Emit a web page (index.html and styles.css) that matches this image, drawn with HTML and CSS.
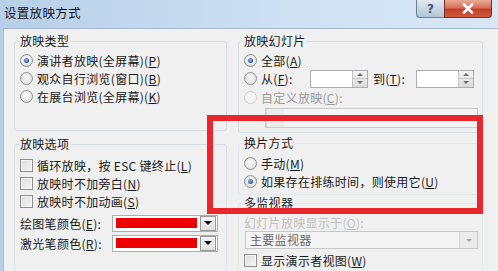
FILE: index.html
```html
<!DOCTYPE html>
<html lang="zh-CN">
<head>
    <meta charset="UTF-8">
    <title>设置放映方式</title>
    <link rel="stylesheet" href="styles.css">
</head>
<body>
<div class="window">
    <div class="titlebar">
        <span class="title">设置放映方式</span>
        <div class="caption-buttons">
            <span class="btn-help">?</span>
            <span class="btn-close">
                <svg width="14" height="11" viewBox="0 0 14 11"><path d="M3 1.5 L11 9.5 M11 1.5 L3 9.5" stroke="#fff" stroke-width="2.6" stroke-linecap="round"/></svg>
            </span>
        </div>
    </div>

    <div class="client">
        <div class="col col-left">
            <fieldset class="group g-type">
                <legend>放映类型</legend>
                <div class="row"><span class="radio checked"></span>演讲者放映(全屏幕)(<u>P</u>)</div>
                <div class="row"><span class="radio"></span>观众自行浏览(窗口)(<u>B</u>)</div>
                <div class="row"><span class="radio"></span>在展台浏览(全屏幕)(<u>K</u>)</div>
            </fieldset>

            <fieldset class="group g-options">
                <legend>放映选项</legend>
                <div class="row"><span class="check"></span>循环放映，按 ESC 键终止(<u>L</u>)</div>
                <div class="row"><span class="check"></span>放映时不加旁白(<u>N</u>)</div>
                <div class="row"><span class="check"></span>放映时不加动画(<u>S</u>)</div>
                <div class="color-rows">
                    <div class="color-row">
                        <span class="color-label">绘图笔颜色(<u>E</u>):</span>
                        <span class="color-combo"><span class="swatch"></span><span class="drop-btn"><i class="arrow"></i></span></span>
                    </div>
                    <div class="color-row">
                        <span class="color-label">激光笔颜色(<u>R</u>):</span>
                        <span class="color-combo"><span class="swatch"></span><span class="drop-btn"><i class="arrow"></i></span></span>
                    </div>
                </div>
            </fieldset>
        </div>

        <div class="col col-right">
            <fieldset class="group g-slides">
                <legend>放映幻灯片</legend>
                <div class="row"><span class="radio checked"></span>全部(<u>A</u>)</div>
                <div class="row row-range">
                    <span class="radio"></span><span class="range-label">从(<u>F</u>):</span>
                    <span class="spinner"><span class="spin-btn"><i class="up"></i><i class="down"></i></span></span>
                    <span class="range-label to">到(<u>T</u>):</span>
                    <span class="spinner"><span class="spin-btn"><i class="up"></i><i class="down"></i></span></span>
                </div>
                <div class="row disabled"><span class="radio off"></span>自定义放映(<u>C</u>):</div>
                <div class="combo combo-custom"><span class="combo-btn"></span></div>
            </fieldset>

            <fieldset class="group g-advance">
                <legend>换片方式</legend>
                <div class="row"><span class="radio"></span>手动(<u>M</u>)</div>
                <div class="row"><span class="radio checked"></span>如果存在排练时间，则使用它(<u>U</u>)</div>
            </fieldset>

            <fieldset class="group g-monitor">
                <legend>多监视器</legend>
                <div class="row faint">幻灯片放映显示于(<u>O</u>):</div>
                <div class="combo combo-monitor"><span class="combo-text">主要监视器</span><span class="combo-btn"><i class="arrow light"></i></span></div>
                <div class="row row-presenter"><span class="check"></span>显示演示者视图(<u>W</u>)</div>
            </fieldset>
        </div>
    </div>

    <div class="highlight"></div>
</div>
</body>
</html>
```

FILE: styles.css
```css
/* Root Variables */
:root {
    --frame: #c6dbf0;
    --face: #f0f0f0;
    --group-line: #d5dfe5;
    --field-line: #abadb3;
    --mark: #e8262b;
}

/* General Styles */
body {
    margin: 0;
    padding: 0;
    font-family: "Noto Sans CJK SC", "Noto Sans", sans-serif;
    font-size: 12px;
    color: #1a1a1a;
}

.window {
    position: relative;
    width: 498px;
    height: 271px;
    overflow: hidden;
    background: linear-gradient(to right, #b7cfe8, #cfe1f3 60%, #d8e7f5);
}

/* Title Bar */
.titlebar {
    height: 28px;
    display: flex;
    justify-content: space-between;
    align-items: flex-start;
    padding-left: 4px;
}

.title {
    font-size: 12.5px;
    letter-spacing: 0.3px;
    line-height: 26px;
    color: #111;
}

.caption-buttons {
    display: flex;
    margin-right: 6px;
}

.btn-help,
.btn-close {
    height: 17px;
    display: flex;
    align-items: center;
    justify-content: center;
    border: 1px solid #6f8197;
    border-top: none;
}

.btn-help {
    width: 27px;
    border-radius: 0 0 0 4px;
    border-right: none;
    background: linear-gradient(#e3ebf3, #c7d5e3 50%, #b5c6d8);
    color: #4d5b6c;
    font-family: "DejaVu Sans", sans-serif;
    font-size: 12px;
    font-weight: bold;
}

.btn-close {
    width: 46px;
    border-radius: 0 0 4px 0;
    border-color: #7a2a22;
    background: linear-gradient(#e9a996, #d7705a 45%, #c2402b 55%, #cf5a40);
}

/* Client Area */
.client {
    margin-left: 3px;
    width: 487px;
    height: 243px;
    background: var(--face);
    border: 1px solid #a7bbd0;
    border-bottom: none;
    display: flex;
    gap: 11px;
    padding: 4px 0 0 10px;
}

.col-left {
    width: 213px;
}

.col-right {
    width: 245px;
}

/* Group Boxes */
.group {
    margin: 0;
    min-width: 0;
    border: 1px solid var(--group-line);
    border-radius: 3px;
    padding: 2px 8px 4px 5px;
}

.group legend {
    padding: 0 1px;
    margin-left: -1px;
    line-height: 16px;
    letter-spacing: 0.3px;
}

.g-type {
    padding-bottom: 25px;
}

.g-options {
    margin-top: 5px;
    padding-top: 4px;
    padding-bottom: 20px;
}

.g-advance {
    margin-top: 2px;
    padding-top: 3px;
    border-color: #e2e7ea;
}

.g-monitor {
    padding-top: 3px;
    border-color: #e2e7ea;
}

.row {
    height: 18px;
    display: flex;
    align-items: center;
    letter-spacing: 0.3px;
    white-space: nowrap;
}

.row u {
    text-decoration-thickness: 1px;
    text-underline-offset: 1px;
}

.disabled {
    color: #9b9b9b;
}

.faint {
    color: #c0c0c0;
    height: 16px;
}

/* Radio and Checkbox */
.radio {
    width: 11px;
    height: 11px;
    border: 1px solid #8e8f8f;
    border-radius: 50%;
    background: radial-gradient(circle at 50% 40%, #fbfbfb, #e3e3e3 70%, #d2d2d2);
    margin-right: 4px;
    flex-shrink: 0;
    display: flex;
    align-items: center;
    justify-content: center;
}

.radio.checked::after {
    content: "";
    width: 5px;
    height: 5px;
    border-radius: 50%;
    background: radial-gradient(circle at 40% 35%, #8fb8e6, #2b5d96 70%, #1b3f6e);
}

.radio.off {
    border-color: #cfcfcf;
    background: #f4f4f4;
}

.check {
    width: 11px;
    height: 11px;
    border: 1px solid #8e8f8f;
    background: linear-gradient(135deg, #dcdcdc, #f6f6f6);
    box-shadow: inset 0 0 0 1px #f4f4f4;
    margin-right: 4px;
    flex-shrink: 0;
}

/* Colour Pickers */
.color-rows {
    margin-top: 3px;
}

.color-row {
    height: 20px;
    display: flex;
    align-items: center;
}

.color-label {
    width: 93px;
    letter-spacing: 0.3px;
    white-space: nowrap;
}

.color-combo {
    width: 102px;
    height: 15px;
    border: 1px solid var(--field-line);
    background: #fff;
    display: flex;
    align-items: center;
    padding-left: 3px;
    gap: 3px;
}

.swatch {
    width: 81px;
    height: 10px;
    background: #ee0000;
}

.drop-btn {
    width: 14px;
    height: 13px;
    border: 1px solid #9a9a9a;
    background: linear-gradient(#f5f5f5, #dedede);
    display: flex;
    align-items: center;
    justify-content: center;
}

.arrow {
    width: 0;
    height: 0;
    border-left: 4px solid transparent;
    border-right: 4px solid transparent;
    border-top: 4px solid #111;
}

.arrow.light {
    border-top-color: #a8a8a8;
    border-left-width: 3px;
    border-right-width: 3px;
    border-top-width: 3px;
}

/* Slide Range */
.row-range {
    height: 19px;
}

.range-label {
    width: 51px;
}

.range-label.to {
    width: 45px;
    margin-left: 5px;
}

.spinner {
    width: 58px;
    height: 16px;
    border: 1px solid var(--field-line);
    background: #fff;
    display: flex;
    justify-content: flex-end;
}

.spin-btn {
    width: 14px;
    display: flex;
    flex-direction: column;
    border-left: 1px solid #c4c4c4;
    background: linear-gradient(#f2f2f2, #dcdcdc);
}

.spin-btn i {
    flex: 1;
    display: flex;
    align-items: center;
    justify-content: center;
}

.spin-btn i::after {
    content: "";
    border-left: 3px solid transparent;
    border-right: 3px solid transparent;
}

.spin-btn .up::after {
    border-bottom: 3px solid #6d6d6d;
}

.spin-btn .down {
    border-top: 1px solid #c8c8c8;
}

.spin-btn .down::after {
    border-top: 3px solid #6d6d6d;
}

/* Combo Boxes */
.combo {
    height: 18px;
    border: 1px solid #c9c9c9;
    background: #f4f4f4;
    display: flex;
    justify-content: space-between;
}

.combo-custom {
    margin: 2px 0 0 21px;
    width: 211px;
}

.combo-monitor {
    margin: 1px 0 0 1px;
    height: 16px;
    width: 231px;
}

.combo-text {
    color: #6a6a6a;
    padding-left: 4px;
    line-height: 16px;
    letter-spacing: 0.3px;
}

.combo-btn {
    width: 17px;
    border-left: 1px solid #d6d6d6;
    background: #ececec;
    display: flex;
    align-items: center;
    justify-content: center;
}

.row-presenter {
    margin-top: 2px;
}

/* Red annotation rectangle */
.highlight {
    position: absolute;
    left: 207px;
    top: 115px;
    width: 264px;
    height: 87px;
    border: 6px solid var(--mark);
}
```
